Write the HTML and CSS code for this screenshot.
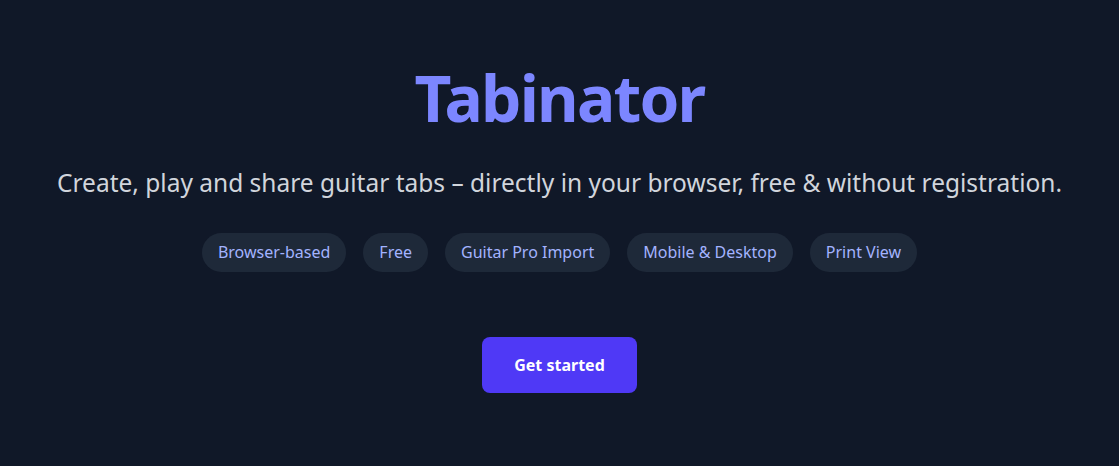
FILE: index.html
```html
<!DOCTYPE html>
<html lang="en">
<head>
<meta charset="utf-8">
<title>Tabinator</title>
<link rel="stylesheet" href="styles.css">
</head>
<body>
<main class="hero">
  <h1 class="title">Tabinator</h1>
  <p class="subtitle">Create, play and share guitar tabs – directly in your browser, free &amp; without registration.</p>
  <ul class="pills">
    <li class="pill">Browser-based</li>
    <li class="pill">Free</li>
    <li class="pill">Guitar Pro Import</li>
    <li class="pill">Mobile &amp; Desktop</li>
    <li class="pill">Print View</li>
  </ul>
  <a class="cta" href="#">Get started</a>
</main>
</body>
</html>
```

FILE: styles.css
```css
html, body {
  margin: 0;
  padding: 0;
  background: #101828;
  height: 100%;
}
body {
  font-family: "Noto Sans", "Open Sans", sans-serif;
}
.hero {
  display: flex;
  flex-direction: column;
  align-items: center;
  padding-top: 62px;
}
.title {
  margin: 0;
  font-family: "Noto Sans", sans-serif;
  font-weight: 700;
  font-size: 64px;
  line-height: 72px;
  color: #7c86ff;
  letter-spacing: -1.8px;
}
.subtitle {
  margin: 33px 0 0;
  font-size: 24.5px;
  line-height: 32px;
  color: #d1d5dc;
}
.pills {
  list-style: none;
  margin: 34px 0 0;
  padding: 0;
  display: flex;
  gap: 17px;
}
.pill {
  background: #1e2939;
  color: #a3b3ff;
  font-size: 16px;
  line-height: 23px;
  padding: 8px 16px;
  border-radius: 999px;
}
.cta {
  margin-top: 65px;
  background: #4f39f6;
  color: #ffffff;
  font-weight: 700;
  font-size: 16px;
  line-height: 24px;
  padding: 16px 32px;
  border-radius: 8px;
  text-decoration: none;
}
```
